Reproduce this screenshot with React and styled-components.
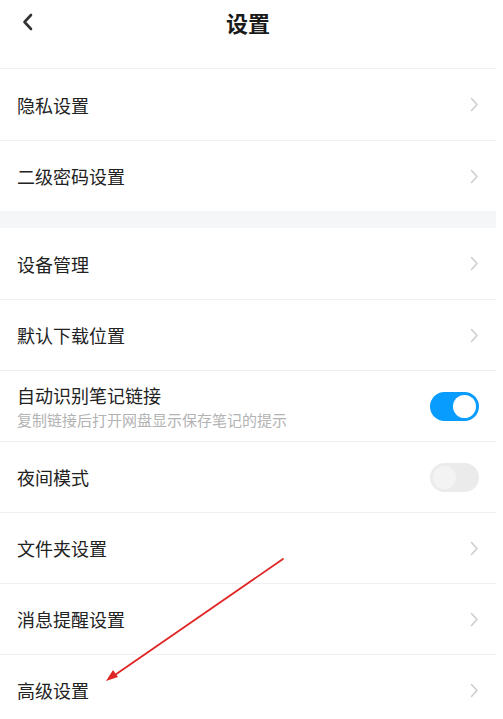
import React from "react";
import styled, { createGlobalStyle } from "styled-components";

const Global = createGlobalStyle`
  html, body { margin: 0; padding: 0; background: #fff; }
  body { font-family: "Noto Sans CJK SC", "Noto Sans", sans-serif; }
`;

const Page = styled.div`
  position: relative;
  width: 496px;
  height: 719px;
  overflow: hidden;
  background: #fff;
`;

const Header = styled.header`
  height: 69px;
  display: flex;
  align-items: flex-start;
  justify-content: center;
  position: relative;
  border-bottom: 1px solid #f0f0f0;
  box-sizing: border-box;
`;

const Title = styled.h1`
  margin: 0;
  padding-top: 6px;
  font-size: 22px;
  font-weight: 700;
  line-height: 32px;
  color: #1a1a1a;
`;

const BackButton = styled.button`
  position: absolute;
  left: 17px;
  top: 10px;
  width: 22px;
  height: 24px;
  padding: 0;
  border: none;
  background: none;
  display: flex;
  align-items: center;
  justify-content: center;
`;

const Group = styled.section`
  background: #fff;
`;

const Gap = styled.div`
  height: 17px;
  background: #f5f6f8;
`;

const Row = styled.div`
  height: 71px;
  display: flex;
  align-items: center;
  justify-content: space-between;
  padding: 0 17px 0 17px;
  box-sizing: border-box;
  border-top: ${(p) => (p.$first ? "none" : "1px solid #f0f0f0")};
`;

const Texts = styled.div`
  display: flex;
  flex-direction: column;
`;

const Label = styled.span`
  font-size: 18px;
  line-height: 26px;
  color: #222;
`;

const Sub = styled.span`
  font-size: 15px;
  line-height: 22px;
  color: #b3b3b3;
  margin-top: 1px;
`;

const Switch = styled.div`
  width: 49px;
  height: 29px;
  border-radius: 15px;
  background: ${(p) => (p.$on ? "#099cff" : "#ebebeb")};
  display: flex;
  align-items: center;
  justify-content: ${(p) => (p.$on ? "flex-end" : "flex-start")};
  padding: 0 3px;
  box-sizing: border-box;
`;

const Knob = styled.div`
  width: 23px;
  height: 23px;
  border-radius: 50%;
  background: ${(p) => (p.$on ? "#fff" : "#f3f3f3")};
`;

const Arrow = styled.svg`
  position: absolute;
  left: 0;
  top: 0;
  pointer-events: none;
`;

const Chevron = () => (
  <svg width="9" height="15" viewBox="0 0 9 15">
    <path d="M1.5 1.5 L7 7.5 L1.5 13.5" fill="none" stroke="#cccccc" strokeWidth="1.5" strokeLinecap="round" strokeLinejoin="round" />
  </svg>
);

const Item = ({ label, sub, toggle, first }) => (
  <Row $first={first}>
    <Texts>
      <Label>{label}</Label>
      {sub && <Sub>{sub}</Sub>}
    </Texts>
    {toggle === undefined ? (
      <Chevron />
    ) : (
      <Switch $on={toggle}>
        <Knob $on={toggle} />
      </Switch>
    )}
  </Row>
);

export default function App() {
  return (
    <Page>
      <Global />
      <Header>
        <BackButton aria-label="back">
          <svg width="14" height="18" viewBox="0 0 14 18">
            <path d="M10 2 L3.5 9 L10 16" fill="none" stroke="#333" strokeWidth="2.6" strokeLinecap="round" strokeLinejoin="round" />
          </svg>
        </BackButton>
        <Title>设置</Title>
      </Header>
      <Group>
        <Item first label="隐私设置" />
        <Item label="二级密码设置" />
      </Group>
      <Gap />
      <Group>
        <Item first label="设备管理" />
        <Item label="默认下载位置" />
        <Item label="自动识别笔记链接" sub="复制链接后打开网盘显示保存笔记的提示" toggle={true} />
        <Item label="夜间模式" toggle={false} />
        <Item label="文件夹设置" />
        <Item label="消息提醒设置" />
        <Item label="高级设置" />
      </Group>
      <Arrow width="496" height="719" viewBox="0 0 496 719">
        <line x1="283" y1="559" x2="112" y2="677" stroke="#e02525" strokeWidth="1.8" strokeLinecap="round" />
        <polygon points="106,681 113,670 118,677" fill="#e02525" />
      </Arrow>
    </Page>
  );
}
